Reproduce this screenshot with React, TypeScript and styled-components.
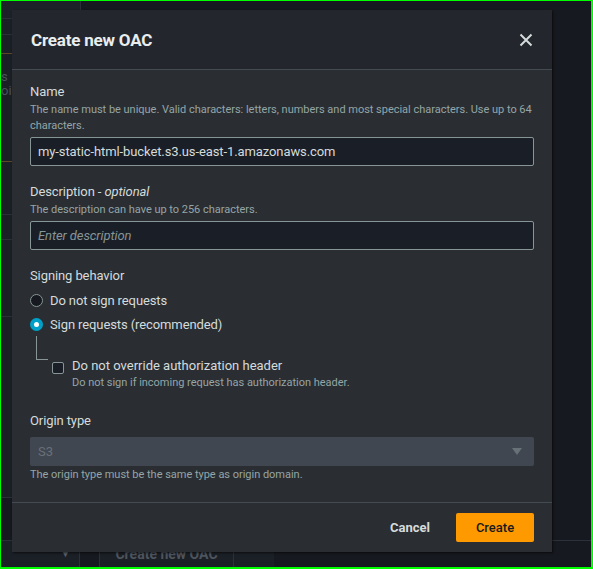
import React from "react";
import styled, { createGlobalStyle } from "styled-components";

const GlobalStyle = createGlobalStyle`
  html, body {
    margin: 0;
    padding: 0;
    background: #16191f;
  }
  * {
    box-sizing: border-box;
  }
  body {
    font-family: Roboto, "Liberation Sans", sans-serif;
  }
`;

function CloseIcon() {
  return (
    <svg width="14" height="14" viewBox="0 0 14 14">
      <path d="M1.5 1.5 L12.5 12.5 M12.5 1.5 L1.5 12.5" stroke="#d5dbdb" strokeWidth="2" fill="none" />
    </svg>
  );
}

function App() {
  return (
    <>
      <GlobalStyle />
      <Frame>
        <Backdrop>
          <SideStrip>
            <StripBlock height={18} />
            <StripRow height={16} />
            <StripRow height={19} accent />
            <StripTexts>
              <StripText>s</StripText>
              <StripText>oi</StripText>
            </StripTexts>
            <StripRow height={53} />
            <StripRow height={25} />
            <StripRow height={77} />
            <StripRow height={181} />
          </SideStrip>
          <BottomRow>
            <FakeSelect>▼</FakeSelect>
            <FakeButton>Create new OAC</FakeButton>
            <FakeCell />
          </BottomRow>
        </Backdrop>

        <Modal>
          <Header>
            <Title>Create new OAC</Title>
            <CloseButton aria-label="Close">
              <CloseIcon />
            </CloseButton>
          </Header>

          <Body>
            <Field>
              <Label>Name</Label>
              <Hint>
                The name must be unique. Valid characters: letters, numbers and most special characters. Use up to 64
                characters.
              </Hint>
              <Input readOnly value="my-static-html-bucket.s3.us-east-1.amazonaws.com" />
            </Field>

            <Field>
              <Label>
                Description - <em>optional</em>
              </Label>
              <Hint>The description can have up to 256 characters.</Hint>
              <Input readOnly placeholder="Enter description" />
            </Field>

            <Field>
              <Label>Signing behavior</Label>
              <RadioGroup>
                <RadioRow>
                  <Radio />
                  <RadioLabel>Do not sign requests</RadioLabel>
                </RadioRow>
                <RadioRow>
                  <Radio checked />
                  <RadioLabel>Sign requests (recommended)</RadioLabel>
                </RadioRow>
              </RadioGroup>
              <Nested>
                <TreeLine />
                <CheckBox />
                <CheckText>
                  <CheckLabel>Do not override authorization header</CheckLabel>
                  <Hint>Do not sign if incoming request has authorization header.</Hint>
                </CheckText>
              </Nested>
            </Field>

            <Field>
              <Label>Origin type</Label>
              <Select>
                <span>S3</span>
                <Caret />
              </Select>
              <Hint>The origin type must be the same type as origin domain.</Hint>
            </Field>
          </Body>

          <Footer>
            <CancelButton>Cancel</CancelButton>
            <PrimaryButton>Create</PrimaryButton>
          </Footer>
        </Modal>
      </Frame>
    </>
  );
}

const Frame = styled.div`
  position: relative;
  width: 593px;
  height: 569px;
  overflow: hidden;
  border-style: solid;
  border-color: #00ff00;
  border-width: 1px 2px 2px 1px;
  background: #16191f;
  display: flex;
  flex-direction: column;
`;

const Backdrop = styled.div`
  flex: 1;
  display: flex;
  flex-direction: column;
  justify-content: space-between;
`;

const SideStrip = styled.div`
  width: 80px;
  display: flex;
  flex-direction: column;
`;

const StripBlock = styled.div<{ height: number }>`
  height: ${(p) => p.height}px;
  background: #1d2128;
  border-right: 1px solid #2c3139;
  border-bottom: 1px solid #2c3139;
`;

const StripRow = styled.div<{ height: number; accent?: boolean }>`
  height: ${(p) => p.height}px;
  background: #1b1f26;
  border-bottom: 1px solid ${(p) => (p.accent ? "#5c4a24" : "#2c3139")};
`;

const StripTexts = styled.div`
  height: 108px;
  padding-top: 16px;
  background: #1b1f26;
  border-bottom: 1px solid #5c4a24;
`;

const StripText = styled.div`
  font-size: 13px;
  line-height: 14px;
  color: #4a525c;
`;

const BottomRow = styled.div`
  display: flex;
  height: 27px;
  border-top: 1px solid #2c3139;
`;

const FakeSelect = styled.div`
  width: 79px;
  padding-right: 8px;
  text-align: right;
  color: #59606a;
  font-size: 11px;
  line-height: 26px;
  border-right: 1px solid #2c3139;
  background: #1b1f26;
`;

const FakeButton = styled.div`
  margin-left: 19px;
  width: 135px;
  border-left: 1px solid #2c3139;
  border-right: 1px solid #2c3139;
  background: #1b1f26;
  color: #4e555e;
  font-weight: 700;
  font-size: 14px;
  line-height: 26px;
  text-align: center;
`;

const FakeCell = styled.div`
  width: 40px;
  background: #1b1f26;
`;

const Modal = styled.div`
  position: absolute;
  left: 11px;
  top: 9px;
  width: 540px;
  height: 542px;
  background: #2a2e33;
  box-shadow: 1px 1px 2px rgba(0, 0, 0, 0.6);
  display: flex;
  flex-direction: column;
  color: #d5dbdb;
`;

const Header = styled.div`
  height: 60px;
  flex: none;
  display: flex;
  align-items: center;
  justify-content: space-between;
  padding: 0 19px 0 19px;
  background: #23272d;
  border-bottom: 1px solid #434a52;
`;

const Title = styled.h2`
  margin: 0;
  font-size: 17px;
  letter-spacing: -0.2px;
  font-weight: 700;
  color: #eaeded;
`;

const CloseButton = styled.button`
  background: none;
  border: none;
  padding: 0;
  width: 14px;
  height: 14px;
  display: flex;
  cursor: pointer;
`;

const Body = styled.div`
  flex: 1;
  padding: 12px 18px 0 18px;
  display: flex;
  flex-direction: column;
  gap: 16px;
`;

const Field = styled.div`
  display: flex;
  flex-direction: column;
`;

const Label = styled.div`
  font-size: 13px;
  letter-spacing: -0.1px;
  line-height: 20px;
  color: #d5dbdb;

  em {
    font-style: italic;
  }
`;

const Hint = styled.div`
  font-size: 11px;
  letter-spacing: -0.02px;
  line-height: 16px;
  color: #95a5a6;
`;

const Input = styled.input`
  margin-top: 3px;
  height: 29px;
  width: 100%;
  padding: 0 7px;
  background: #1a1f27;
  border: 1px solid #879596;
  border-radius: 2px;
  font-family: inherit;
  font-size: 13px;
  letter-spacing: -0.1px;
  color: #d5dbdb;
  outline: none;

  &::placeholder {
    color: #879596;
    font-style: italic;
  }
`;

const RadioGroup = styled.div`
  margin-top: 2px;
  display: flex;
  flex-direction: column;
`;

const RadioRow = styled.div`
  height: 24px;
  display: flex;
  align-items: center;
  gap: 7px;
`;

const Radio = styled.span<{ checked?: boolean }>`
  width: 13px;
  height: 13px;
  border-radius: 50%;
  flex: none;
  background: ${(p) => (p.checked ? "#00a1c9" : "#16191f")};
  border: ${(p) => (p.checked ? "none" : "1px solid #879596")};
  display: flex;
  align-items: center;
  justify-content: center;

  &::after {
    content: "";
    width: 5px;
    height: 5px;
    border-radius: 50%;
    background: #ffffff;
    display: ${(p) => (p.checked ? "block" : "none")};
  }
`;

const RadioLabel = styled.span`
  font-size: 13px;
  letter-spacing: -0.1px;
  color: #d5dbdb;
`;

const Nested = styled.div`
  display: flex;
  align-items: flex-start;
  padding-left: 6px;
  margin-bottom: 4px;
`;

const TreeLine = styled.div`
  width: 12px;
  height: 24px;
  border-left: 1px solid #879596;
  border-bottom: 1px solid #879596;
  flex: none;
`;

const CheckBox = styled.span`
  margin: 26px 0 0 4px;
  width: 12px;
  height: 12px;
  flex: none;
  border: 1px solid #879596;
  border-radius: 2px;
  background: #1a1f27;
`;

const CheckText = styled.div`
  margin: 21px 0 0 8px;
  display: flex;
  flex-direction: column;
`;

const CheckLabel = styled.div`
  font-size: 13px;
  line-height: 18px;
  color: #d5dbdb;
`;

const Select = styled.div`
  margin-top: 6px;
  margin-bottom: 1px;
  height: 29px;
  background: #414750;
  border-radius: 2px;
  padding: 0 12px 0 8px;
  display: flex;
  align-items: center;
  justify-content: space-between;
  font-size: 13px;
  color: #687078;
`;

const Caret = styled.span`
  width: 0;
  height: 0;
  border-left: 5px solid transparent;
  border-right: 5px solid transparent;
  border-top: 7px solid #687078;
`;

const Footer = styled.div`
  height: 50px;
  flex: none;
  border-top: 1px solid #434a52;
  display: flex;
  align-items: center;
  justify-content: flex-end;
  gap: 6px;
  padding-right: 18px;
`;

const CancelButton = styled.button`
  background: none;
  border: none;
  padding: 0 20px;
  font-family: inherit;
  font-size: 13px;
  font-weight: 700;
  color: #d5dbdb;
  cursor: pointer;
`;

const PrimaryButton = styled.button`
  width: 78px;
  height: 29px;
  background: #ff9900;
  border: none;
  border-radius: 2px;
  font-family: inherit;
  font-size: 13px;
  font-weight: 500;
  color: #16191f;
  cursor: pointer;
`;

export default App;
